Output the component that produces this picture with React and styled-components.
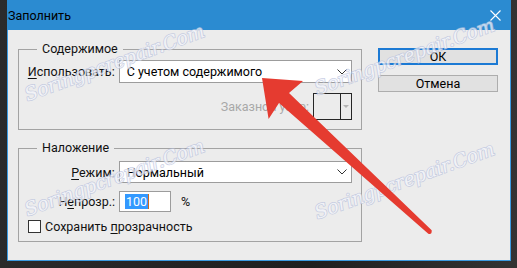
import React from 'react';
import styled, { createGlobalStyle } from 'styled-components';

const GlobalStyle = createGlobalStyle`
  html, body {
    margin: 0;
    padding: 0;
    background: #262626;
  }
  body {
    width: 517px;
    height: 268px;
    overflow: hidden;
    font-family: Roboto, "Noto Sans", sans-serif;
    font-size: 12.5px;
    color: #111;
  }
`;

const Stage = styled.div`
  position: relative;
  width: 517px;
  height: 268px;
  background: linear-gradient(90deg, #2b2b2b 0%, #1f1f1f 60%, #333 100%);
`;

const Window = styled.div`
  margin-left: 7px;
  width: 504px;
  height: 261px;
  box-sizing: border-box;
  background: #ececec;
  border: 1px solid #3b9be2;
  border-top: none;
  display: flex;
  flex-direction: column;
`;

const TitleBar = styled.div`
  height: 30px;
  margin: 0 -1px;
  background: #2b8bd1;
  display: flex;
  align-items: center;
  justify-content: space-between;
  padding: 0 10px 0 1px;
  font-size: 12.5px;
  color: #000;
`;

const CloseIcon = styled.svg`
  width: 11px;
  height: 11px;
  margin-top: 1px;
`;

const Body = styled.div`
  display: flex;
  gap: 16px;
  padding: 11px 12px 0 10px;
`;

const Column = styled.div`
  display: flex;
  flex-direction: column;
  gap: 10px;
`;

const Group = styled.fieldset`
  width: 344px;
  box-sizing: border-box;
  margin: 0;
  padding: 0 9px ${p => p.$bottom}px 0;
  border: 1px solid #a3a3a3;
  min-width: 0;
`;

const Legend = styled.legend`
  margin-left: 18px;
  padding: 0 5px;
  font-size: 12.5px;
  line-height: 16px;
  color: #111;
`;

const Row = styled.div`
  display: flex;
  align-items: center;
  height: ${p => p.$h}px;
  margin-top: ${p => p.$top}px;
  justify-content: ${p => (p.$end ? 'flex-end' : 'flex-start')};
  padding-left: ${p => p.$indent || 0}px;
`;

const Label = styled.label`
  width: 96px;
  margin-right: 4px;
  text-align: right;
  color: #111;
  white-space: nowrap;
`;

const Key = styled.span`
  text-decoration: underline;
  text-underline-offset: 2px;
`;

const Select = styled.div`
  width: 234px;
  height: 100%;
  box-sizing: border-box;
  background: #fff;
  border: 1px solid #9c9c9c;
  display: flex;
  align-items: center;
  justify-content: space-between;
  padding: 0 4px 0 7px;
  color: #000;
`;

const Chevron = styled.svg`
  width: 10px;
  height: 6px;
`;

const DisabledText = styled.span`
  color: #a8a8a8;
  margin-right: 4px;
`;

const PatternBox = styled.div`
  width: 39px;
  height: 27px;
  box-sizing: border-box;
  border: 1px solid #262626;
  display: flex;
`;

const PatternSwatch = styled.div`
  width: 26px;
  border-right: 1px solid #262626;
`;

const PatternArrow = styled.div`
  flex: 1;
  display: flex;
  align-items: center;
  justify-content: center;
  &::after {
    content: '';
    border-left: 3px solid transparent;
    border-right: 3px solid transparent;
    border-top: 3px solid #b4b4b4;
  }
`;

const NumberField = styled.div`
  width: 52px;
  height: 100%;
  box-sizing: border-box;
  background: #fff;
  border: 1px solid #9c9c9c;
  display: flex;
  align-items: center;
  padding-left: 5px;
`;

const Selection = styled.span`
  background: #3399ff;
  color: #fff;
  line-height: 15px;
  padding: 0 1px;
  border-right: 1px solid #d06a1c;
`;

const Unit = styled.span`
  margin-left: 10px;
`;

const CheckBox = styled.span`
  width: 13px;
  height: 13px;
  box-sizing: border-box;
  border: 1px solid #333;
  background: #fff;
  margin-right: 4px;
`;

const Buttons = styled.div`
  display: flex;
  flex-direction: column;
  gap: 10px;
  padding-top: 7px;
`;

const Button = styled.button`
  width: 120px;
  height: 17px;
  box-sizing: border-box;
  background: #e1e1e1;
  border: ${p => (p.$primary ? '2px solid #1c7ad4' : '1px solid #adadad')};
  font-family: Roboto, "Noto Sans", sans-serif;
  font-size: 12.5px;
  line-height: 13px;
  color: #000;
  padding: 0;
  display: flex;
  align-items: center;
  justify-content: center;
`;

const Overlay = styled.svg`
  position: absolute;
  left: 0;
  top: 0;
  width: 517px;
  height: 268px;
  pointer-events: none;
`;

const Mark = styled.text`
  font-family: "DejaVu Serif Condensed", "DejaVu Serif", serif;
  font-style: italic;
  font-size: 19px;
  fill: #f3f4fa;
  stroke: #b8c1dc;
  stroke-width: 1.4px;
  paint-order: stroke;
  opacity: 0.75;
`;

const marks = [
  [115, 64],
  [405, 58],
  [115, 179],
  [405, 182],
];

export default function App() {
  return (
    <Stage>
      <GlobalStyle />
      <Window>
        <TitleBar>
          <span>Заполнить</span>
          <CloseIcon viewBox="0 0 11 11">
            <path d="M0.5 0.5 L10.5 10.5 M10.5 0.5 L0.5 10.5" stroke="#fff" strokeWidth="1.1" />
          </CloseIcon>
        </TitleBar>
        <Body>
          <Column>
            <Group $bottom={9}>
              <Legend>Содержимое</Legend>
              <Row $h={23} $top={3}>
                <Label><Key>И</Key>спользовать:</Label>
                <Select>
                  <span>С учетом содержимого</span>
                  <Chevron viewBox="0 0 10 6">
                    <path d="M0.5 0.5 L5 5 L9.5 0.5" stroke="#333" fill="none" />
                  </Chevron>
                </Select>
              </Row>
              <Row $h={27} $top={10} $end>
                <DisabledText>Заказной узор:</DisabledText>
                <PatternBox>
                  <PatternSwatch />
                  <PatternArrow />
                </PatternBox>
              </Row>
            </Group>
            <Group $bottom={8}>
              <Legend>Наложение</Legend>
              <Row $h={22} $top={5}>
                <Label><Key>Р</Key>ежим:</Label>
                <Select>
                  <span>Нормальный</span>
                  <Chevron viewBox="0 0 10 6">
                    <path d="M0.5 0.5 L5 5 L9.5 0.5" stroke="#333" fill="none" />
                  </Chevron>
                </Select>
              </Row>
              <Row $h={21} $top={8}>
                <Label>Н<Key>е</Key>прозр.:</Label>
                <NumberField>
                  <Selection>100</Selection>
                </NumberField>
                <Unit>%</Unit>
              </Row>
              <Row $h={14} $top={7} $indent={9}>
                <CheckBox />
                <span>Сохранить <Key>п</Key>розрачность</span>
              </Row>
            </Group>
          </Column>
          <Buttons>
            <Button $primary>ОК</Button>
            <Button>Отмена</Button>
          </Buttons>
        </Body>
      </Window>
      <Overlay viewBox="0 0 517 268">
        {marks.map(([x, y], i) => (
          <Mark
            key={i}
            x={x}
            y={y}
            textAnchor="middle"
            dominantBaseline="middle"
            textLength="190"
            lengthAdjust="spacingAndGlyphs"
            transform={`rotate(-20 ${x} ${y})`}
          >
            Soringpcrepair.Com
          </Mark>
        ))}
        <path
          d="M262 78 L303 81 L289 93 L431.7 230.2 Q432 235 428.3 233.8 L279 103 L268.6 119 Z"
          fill="#e53b30"
        />
      </Overlay>
    </Stage>
  );
}
